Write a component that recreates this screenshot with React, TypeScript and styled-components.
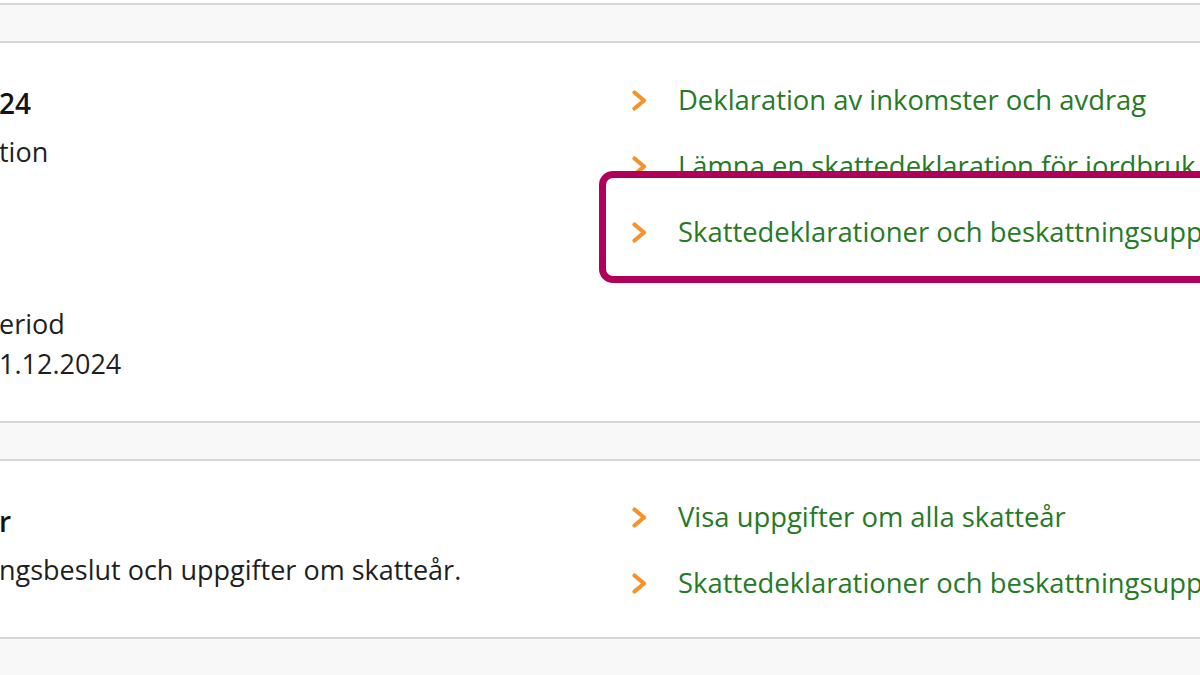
import React from "react";
import styled, { createGlobalStyle } from "styled-components";

const GlobalStyle = createGlobalStyle`
  html, body {
    margin: 0;
    padding: 0;
    background: #f8f8f8;
    font-family: "Open Sans", "Noto Sans", sans-serif;
    overflow: hidden;
  }
  #root { width: 1200px; height: 675px; overflow: hidden; }
`;

const Page = styled.div`
  display: flex;
  flex-direction: column;
  gap: 36px;
  width: 1200px;
  height: 675px;
  background: #f8f8f8;
`;

const TopStub = styled.div`
  height: 3px;
  background: #ffffff;
  border-bottom: 2px solid #d6d6d6;
`;

const Card = styled.section<{ $height: number }>`
  position: relative;
  box-sizing: border-box;
  height: ${(p) => p.$height}px;
  background: #ffffff;
  border-top: 2px solid #d6d6d6;
  border-bottom: 2px solid #d6d6d6;
  display: grid;
  grid-template-columns: 632px 1fr;
`;

const InfoColumn = styled.div`
  display: flex;
  flex-direction: column;
  padding-top: 40px;
  margin-left: -1px;
  color: #1f1f1f;
`;

const Title = styled.h2`
  margin: 0;
  font-size: 28px;
  line-height: 40px;
  font-weight: 600;
  color: #141414;
  white-space: nowrap;
`;

const Text = styled.p<{ $gapTop?: number }>`
  margin: ${(p) => p.$gapTop ?? 0}px 0 0 0;
  font-size: 27px;
  line-height: 40px;
  font-weight: 400;
  white-space: nowrap;
`;

const LinkList = styled.ul<{ $padTop: number }>`
  list-style: none;
  margin: 0;
  padding: ${(p) => p.$padTop}px 0 0 0;
  display: flex;
  flex-direction: column;
  gap: 26px;
  min-width: 0;
  overflow: hidden;
`;

const LinkRow = styled.li<{ $raised?: boolean }>`
  display: flex;
  align-items: center;
  gap: 31px;
  height: 40px;
  white-space: nowrap;
  position: ${(p) => (p.$raised ? "relative" : "static")};
  z-index: ${(p) => (p.$raised ? 2 : "auto")};
`;

const LinkText = styled.a`
  font-size: 27.4px;
  line-height: 40px;
  color: #267a26;
  text-decoration: none;
`;

const Chevron = styled.svg`
  flex: 0 0 auto;
  width: 15px;
  height: 21px;
`;

const HighlightFrame = styled.div`
  position: absolute;
  left: 599px;
  right: -30px;
  top: 128px;
  height: 112px;
  box-sizing: border-box;
  border: 7px solid #b0005a;
  border-radius: 14px;
  background: #ffffff;
  z-index: 1;
`;

const Arrow = () => (
  <Chevron viewBox="0 0 15 21">
    <path
      d="M2.5 2.5 L12 10.5 L2.5 18.5"
      fill="none"
      stroke="#f7922a"
      strokeWidth="4.2"
      strokeLinecap="round"
      strokeLinejoin="round"
    />
  </Chevron>
);

const Link = ({ children, raised }: { children: React.ReactNode; raised?: boolean }) => (
  <LinkRow $raised={raised}>
    <Arrow />
    <LinkText href="#">{children}</LinkText>
  </LinkRow>
);

export default function App() {
  return (
    <>
      <GlobalStyle />
      <Page>
        <TopStub />
        <Card $height={382}>
          <InfoColumn>
            <Title>24</Title>
            <Text $gapTop={9}>tion</Text>
            <Text $gapTop={132}>eriod</Text>
            <Text>1.12.2024</Text>
          </InfoColumn>
          <LinkList $padTop={37}>
            <Link>Deklaration av inkomster och avdrag</Link>
            <Link>Lämna en skattedeklaration för jordbruk</Link>
            <Link raised>Skattedeklarationer och beskattningsupp</Link>
          </LinkList>
          <HighlightFrame />
        </Card>
        <Card $height={180}>
          <InfoColumn>
            <Title>r</Title>
            <Text $gapTop={9}>ngsbeslut och uppgifter om skatteår.</Text>
          </InfoColumn>
          <LinkList $padTop={36}>
            <Link>Visa uppgifter om alla skatteår</Link>
            <Link>Skattedeklarationer och beskattningsupp</Link>
          </LinkList>
        </Card>
      </Page>
    </>
  );
}
